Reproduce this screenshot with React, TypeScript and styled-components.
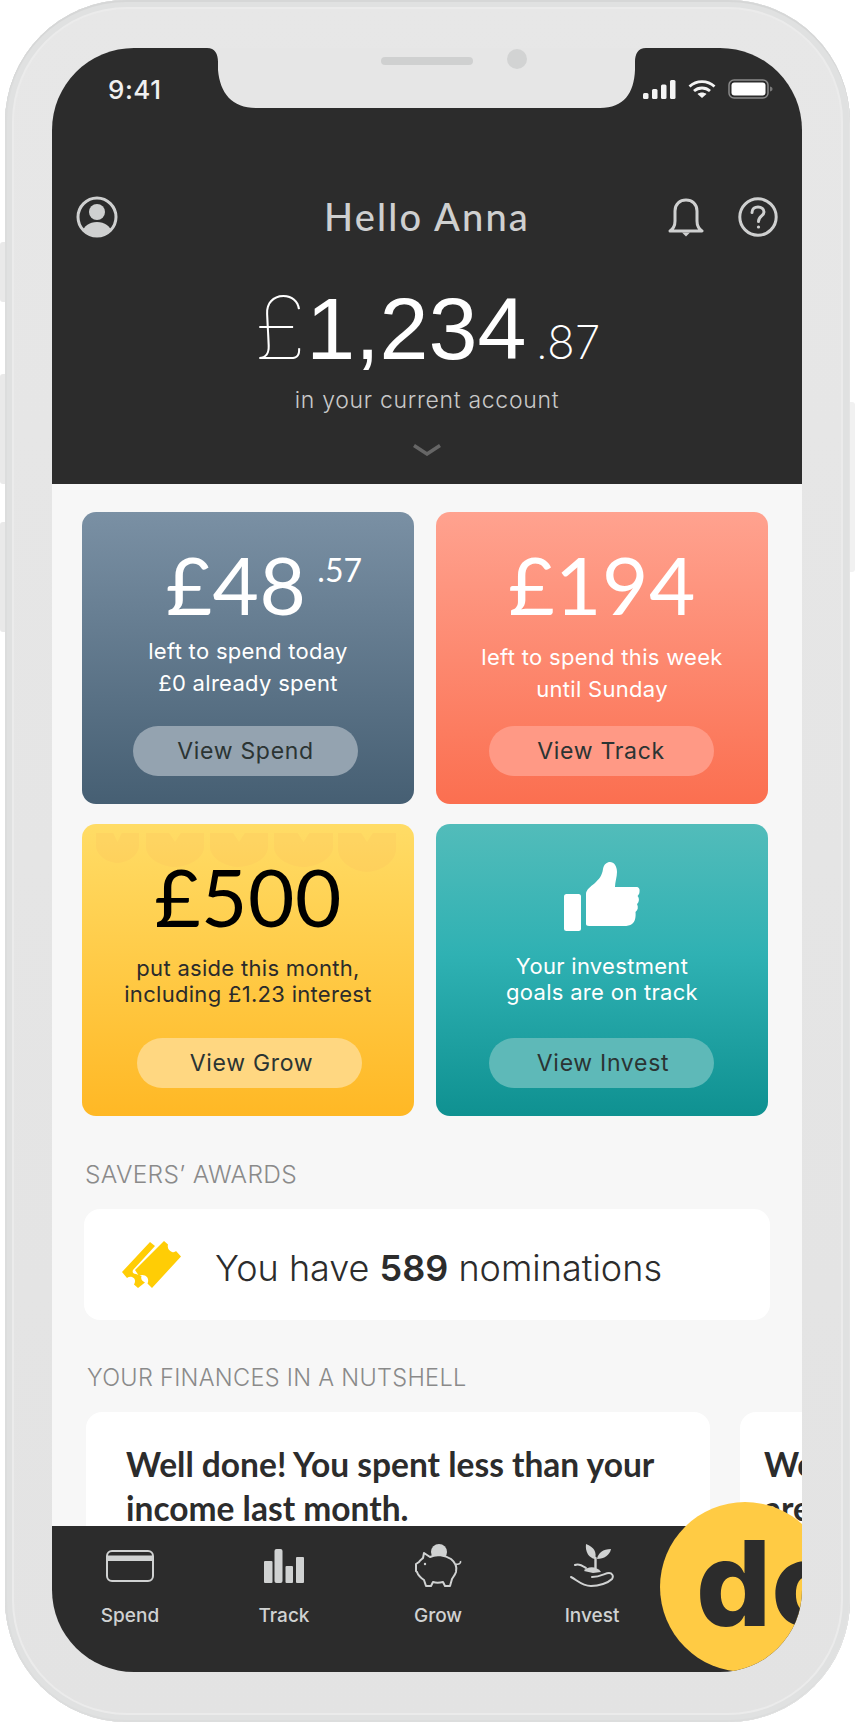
import styled, { createGlobalStyle } from 'styled-components'

// global
const GlobalStyle = createGlobalStyle`
  html, body {
    margin: 0;
    padding: 0;
    background: #fff;
  }
  * {
    box-sizing: border-box;
  }
`

// styled
const Page = styled.div`
  width: 855px;
  height: 1724px;
  padding: 0 5px;
  overflow: hidden;
  font-family: Inter, 'Liberation Sans', sans-serif;
`
const Phone = styled.div`
  position: relative;
  width: 845px;
  height: 1722px;
  padding: 48px 48px 0 47px;
  border-radius: 122px;
  background: linear-gradient(#e7e7e7, #e3e3e3);
  box-shadow:
    inset 0 2px 0 #d6d7d7,
    inset 2px 0 0 #dcdddd,
    inset -1px 0 0 #e4e4e4,
    inset 0 -2px 0 #dcdddd,
    inset 0 0 0 7px #e0e1e1,
    inset 0 0 0 9px #ebebeb;
`
const SideButton = styled.div<{ $top: number; $height: number; $right?: boolean }>`
  position: absolute;
  top: ${(p) => p.$top}px;
  height: ${(p) => p.$height}px;
  width: 5px;
  background: ${(p) => (p.$right ? '#f1f1f1' : '#e9e9e9')};
  ${(p) => (p.$right ? 'right: -5px; border-radius: 0 3px 3px 0;' : 'left: -5px; border-radius: 3px 0 0 3px;')}
`
const Screen = styled.div`
  position: relative;
  display: flex;
  flex-direction: column;
  width: 750px;
  height: 1624px;
  border-radius: 82px;
  overflow: hidden;
  background: #f7f7f7;
`
const Notch = styled.svg`
  position: absolute;
  top: 0;
  left: 155px;
`
const Header = styled.header`
  flex: none;
  height: 436px;
  padding: 27px 24px 0 24px;
  background: #2c2c2c;
  display: flex;
  flex-direction: column;
  align-items: center;
`
const StatusBar = styled.div`
  width: 100%;
  height: 28px;
  display: flex;
  justify-content: space-between;
  align-items: center;
  padding: 0 5px 0 32px;
`
const Time = styled.span`
  font-size: 26px;
  font-weight: 500;
  letter-spacing: 0.5px;
  color: #f0f0f0;
`
const StatusIcons = styled.div`
  display: flex;
  align-items: center;
  gap: 12px;
`
const TopRow = styled.div`
  width: 100%;
  margin-top: 90px;
  height: 40px;
  display: grid;
  grid-template-columns: 1fr auto 1fr;
  align-items: center;
`
const Greeting = styled.h1`
  margin: 0 0 2px;
  font-family: Lato, sans-serif;
  font-size: 38px;
  font-weight: 500;
  letter-spacing: 2.2px;
  color: #cfd0d0;
`
const HeaderActions = styled.div`
  justify-self: end;
  display: flex;
  align-items: center;
  gap: 34px;
`
const Balance = styled.div`
  margin-top: 42px;
  display: flex;
  align-items: baseline;
  color: #fff;
  line-height: 104px;
`
const BalanceCurrency = styled.span`
  font-size: 88px;
  font-weight: 100;
`
const BalanceMain = styled.span`
  font-family: 'Liberation Sans', sans-serif;
  font-size: 88px;
  font-weight: 400;
`
const BalancePence = styled.span`
  margin-left: 9px;
  font-size: 46px;
  font-weight: 200;
`
const BalanceCaption = styled.div`
  margin-top: -8px;
  font-size: 23px;
  font-weight: 300;
  letter-spacing: 0.7px;
  color: #c9c9c9;
`
const Chevron = styled.svg`
  margin-top: 30px;
`
const Content = styled.main`
  flex: 1;
  min-height: 0;
  overflow: hidden;
  padding-top: 28px;
`
const CardGrid = styled.div`
  display: grid;
  grid-template-columns: 332px 332px;
  gap: 20px 22px;
  margin-left: 30px;
`
const tones = {
  spend: { bg: 'linear-gradient(#7a90a4, #465f73)', button: '#94a3b0', color: '#fff' },
  track: { bg: 'linear-gradient(#ffa28f, #fb6f50)', button: '#ff9985', color: '#fff' },
  grow: { bg: 'linear-gradient(#ffdc66, #ffb825)', button: '#ffd781', color: '#2b2b2b' },
  invest: { bg: 'linear-gradient(#52bcba, #2fb1b3 45%, #0f9191)', button: '#5eb9b8', color: '#fff' },
}
type Tone = keyof typeof tones

const Card = styled.section<{ $tone: Tone }>`
  position: relative;
  height: 292px;
  padding-bottom: 28px;
  border-radius: 14px;
  overflow: hidden;
  display: flex;
  flex-direction: column;
  align-items: center;
  background: ${(p) => tones[p.$tone].bg};
  color: ${(p) => tones[p.$tone].color};
`
const Amount = styled.div<{ $dark?: boolean; $nudge?: number }>`
  position: relative;
  height: 80px;
  margin: 32px ${(p) => p.$nudge ?? 0}px 0 0;
  font-family: Lato, sans-serif;
  font-size: 80px;
  font-weight: 400;
  line-height: 80px;
  letter-spacing: 0.5px;
  color: ${(p) => (p.$dark ? '#000' : '#fff')};
`
const AmountPence = styled.span`
  position: absolute;
  left: calc(100% + 11px);
  top: -14px;
  font-size: 32px;
  font-weight: 400;
  letter-spacing: 0;
`
const CardText = styled.p<{ $top: number; $line: number }>`
  margin: ${(p) => p.$top}px 0 0;
  font-size: 22px;
  font-weight: 400;
  line-height: ${(p) => p.$line}px;
  letter-spacing: 0.3px;
  text-align: center;
`
const ViewButton = styled.button<{ $tone: Tone; $nudge?: number; $inset?: number }>`
  margin: auto ${(p) => p.$nudge ?? 0}px 0 0;
  width: 225px;
  height: 50px;
  padding: 0 0 0 ${(p) => p.$inset ?? 0}px;
  border: 0;
  border-radius: 25px;
  background: ${(p) => tones[p.$tone].button};
  font-family: Inter, sans-serif;
  font-size: 23px;
  font-weight: 400;
  letter-spacing: 0.7px;
  color: #2b3433;
`
const Hearts = styled.svg`
  position: absolute;
  top: 8px;
  left: 14px;
`
const ThumbIcon = styled.svg`
  margin-top: 38px;
`
const SectionLabel = styled.h2<{ $top: number; $left: number; $size: number }>`
  margin: ${(p) => p.$top}px 0 0 ${(p) => p.$left}px;
  font-size: ${(p) => p.$size}px;
  font-weight: 300;
  line-height: 28px;
  letter-spacing: 0.3px;
  color: #8a8a8a;
  text-transform: uppercase;
`
const AwardCard = styled.div`
  margin: 21px 0 0 32px;
  width: 686px;
  height: 111px;
  padding-left: 38px;
  border-radius: 16px;
  background: #fff;
  display: flex;
  align-items: center;
  gap: 34px;
`
const AwardText = styled.span`
  padding-top: 6px;
  font-size: 36px;
  font-weight: 300;
  color: #2c2c2c;
  b {
    font-weight: 600;
  }
`
const FinanceRow = styled.div`
  margin: 20px 0 0 34px;
  display: flex;
  gap: 30px;
`
const FinanceCard = styled.article`
  flex: none;
  width: 624px;
  height: 300px;
  padding: 30px 24px 0 40px;
  border-radius: 16px 16px 0 0;
  background: #fff;
`
const FinanceTitle = styled.h3`
  margin: 0;
  font-family: Lato, sans-serif;
  font-size: 33.5px;
  font-weight: 700;
  line-height: 44px;
  color: #2c2c2c;
`
const NextTitle = styled(FinanceTitle)`
  margin-left: -16px;
  white-space: nowrap;
`
const Nav = styled.nav`
  flex: none;
  height: 146px;
  background: #2c2c2c;
  display: flex;
  padding-top: 18px;
  padding-left: 1px;
`
const NavItem = styled.div`
  width: 154px;
  height: 84px;
  display: flex;
  flex-direction: column;
  align-items: center;
  justify-content: space-between;
`
const NavIconBox = styled.div`
  height: 44px;
  display: flex;
  align-items: center;
  justify-content: center;
`
const NavLabel = styled.span`
  font-size: 19px;
  font-weight: 500;
  line-height: 24px;
  color: #d0d2d2;
`
const DoBadge = styled.div`
  position: absolute;
  left: 608px;
  top: 1454px;
  width: 170px;
  height: 170px;
  border-radius: 50%;
  background: #ffcb44;
  overflow: hidden;
`
const DoText = styled.span`
  position: absolute;
  left: 36px;
  top: 6px;
  font-family: Inter, sans-serif;
  font-size: 118px;
  font-weight: 800;
  line-height: 150px;
  letter-spacing: 0;
  color: #2c2c2c;
`

// icons
const SignalIcon = () => (
  <svg width="33" height="19" viewBox="0 0 33 19" fill="#f4f4f4">
    <rect x="0" y="13" width="5.5" height="6" rx="1.5" />
    <rect x="9" y="9" width="5.5" height="10" rx="1.5" />
    <rect x="18" y="4.5" width="5.5" height="14.5" rx="1.5" />
    <rect x="27" y="0" width="5.5" height="19" rx="1.5" />
  </svg>
)
const WifiIcon = () => (
  <svg width="28" height="18" viewBox="0 0 28 18" fill="none" stroke="#f4f4f4" strokeWidth="2.8">
    <path d="M1.5 6.5C8.5 0 19.5 0 26.5 6.5" />
    <path d="M6 11C10.5 7 17.5 7 22 11" />
    <path d="M14 18L9.5 14C12 12 16 12 18.5 14Z" fill="#f4f4f4" stroke="none" />
  </svg>
)
const BatteryIcon = () => (
  <svg width="45" height="20" viewBox="0 0 45 20">
    <rect x="1" y="1" width="39" height="18" rx="5" fill="none" stroke="#8a8a8a" strokeWidth="1.5" />
    <rect x="3.5" y="3.5" width="34" height="13" rx="3" fill="#fff" />
    <path d="M42 7.5C44 8 44.5 9 44.5 10C44.5 11 44 12 42 12.5Z" fill="#7a7a7a" />
  </svg>
)
const AvatarIcon = () => (
  <svg width="42" height="42" viewBox="0 0 42 42">
    <defs>
      <clipPath id="avatar-clip">
        <circle cx="21" cy="21" r="19" />
      </clipPath>
    </defs>
    <circle cx="21" cy="21" r="19" fill="none" stroke="#cfd0d0" strokeWidth="3" />
    <circle cx="21" cy="16" r="8" fill="#cfd0d0" />
    <ellipse cx="21" cy="36" rx="14" ry="10" fill="#cfd0d0" clipPath="url(#avatar-clip)" />
  </svg>
)
const BellIcon = () => (
  <svg width="36" height="39" viewBox="0 0 36 39" fill="none" stroke="#cfd0d0" strokeWidth="3" strokeLinecap="round">
    <path d="M2 33C5 31 7 28 7 23V13C7 6 12 2 18 2C24 2 29 6 29 13V23C29 28 31 31 34 33Z" strokeLinejoin="round" />
    <path d="M14 34.5H22L18 38.5Z" fill="#cfd0d0" stroke="none" />
  </svg>
)
const HelpIcon = () => (
  <svg width="40" height="40" viewBox="0 0 40 40" fill="none" stroke="#cfd0d0" strokeWidth="3" strokeLinecap="round">
    <circle cx="20" cy="20" r="18.2" />
    <path d="M14 15.5C14 11.5 17 10 20 10C23.5 10 26 12 26 15C26 19 20.5 19 20.5 24.5" />
    <circle cx="20.5" cy="30" r="1.6" fill="#cfd0d0" stroke="none" />
  </svg>
)
const HeartsPattern = () => {
  const shields = [
    { x: 0, w: 43, h: 31 },
    { x: 50, w: 58, h: 35 },
    { x: 114, w: 58, h: 35 },
    { x: 178, w: 59, h: 35 },
    { x: 242, w: 58, h: 40 },
  ]
  return (
    <Hearts width="300" height="42" viewBox="0 0 300 42">
      <defs>
        <pattern id="heart-dots" width="2" height="2" patternUnits="userSpaceOnUse">
          <circle cx="1" cy="1" r="0.7" fill="#f9bd5a" />
        </pattern>
      </defs>
      {shields.map((s) => (
        <path
          key={s.x}
          fill="url(#heart-dots)"
          opacity="0.6"
          d={`M${s.x} 1H${s.x + s.w * 0.4}L${s.x + s.w * 0.5} 10L${s.x + s.w * 0.6} 1H${s.x + s.w}V${s.h * 0.42}C${s.x + s.w} ${s.h * 0.8} ${s.x + s.w * 0.68} ${s.h} ${s.x + s.w * 0.5} ${s.h}C${s.x + s.w * 0.32} ${s.h} ${s.x} ${s.h * 0.8} ${s.x} ${s.h * 0.42}Z`}
        />
      ))}
    </Hearts>
  )
}
const ThumbsUp = () => (
  <ThumbIcon width="76" height="70" viewBox="0 0 76 70" fill="#fff">
    <rect x="0" y="32" width="17" height="37" rx="2.5" />
    <path d="M22 62V32C22 28 26 25 31 21C35 17 38 14 39 7C40 2 43 0 46 0C50 0 53 4 53 10C53 15 51 20 51 25L72 25C75 25 76 27 75.5 30C75.5 32 74 33.5 73.5 34C75.5 36 75.5 40 73 42C74.5 45 74 48 71.5 50C72 55 71 60 68 62C66 63.5 63 64 60 64H25C23 64 22 63 22 62Z" />
  </ThumbIcon>
)
const TicketIcon = () => (
  <svg width="59" height="47" viewBox="0 0 59 47" fill="#ffcd05">
    <path d="M42 0L46 3.5C45 7 47 10 50 11C52 11.5 53 11 54 10L59 15.5L30 47L25.5 42.5C27 39 26 36 23 34.5C20.5 33.5 18.5 34 17 35L13 29Z" />
    <path d="M28 1L33 5L11 29C10 31 11 33 14 33L19.5 35C18.5 38 20 40 23 41.5L16 47L12 43.5C14 40 13 37 10 36C8 35.5 6.5 36 5 37L0 31Z" />
  </svg>
)
const CardNavIcon = () => (
  <svg width="48" height="32" viewBox="0 0 48 32" fill="none">
    <rect x="1" y="1" width="46" height="30" rx="5" stroke="#d0d2d2" strokeWidth="2" />
    <rect x="1" y="5.5" width="46" height="5.5" fill="#d0d2d2" />
  </svg>
)
const BarsNavIcon = () => (
  <svg width="40" height="34" viewBox="0 0 40 34" fill="#d0d2d2">
    <rect x="0" y="12" width="8.5" height="22" rx="1" />
    <rect x="10.5" y="0" width="8" height="34" rx="2" />
    <rect x="21.5" y="17" width="7.5" height="17" rx="1" />
    <rect x="32" y="8" width="8" height="26" rx="1" />
  </svg>
)
const PigNavIcon = () => (
  <svg width="47" height="44" viewBox="0 0 47 44" fill="none" stroke="#d0d2d2" strokeWidth="2" strokeLinejoin="round">
    <circle cx="24" cy="8" r="8" fill="#d0d2d2" stroke="none" />
    <path
      d="M9 9L15 13C21 10 30 11 36 15C41 19 42 24 41 28C40 31 38 33 37 35L35 42H30L28 38C24 39 21 39 18 38L16 42H11L9 36C6 34 3 31 2 28L1 27V20L4 18C5 16 7 15 8 14Z"
      fill="#2c2c2c"
    />
    <path d="M41 20C44 21 46 19 45.5 17" strokeWidth="1.6" />
    <circle cx="10" cy="20" r="1.2" fill="#d0d2d2" stroke="none" />
  </svg>
)
const PlantNavIcon = () => (
  <svg width="44" height="44" viewBox="0 0 44 44" fill="none" stroke="#d0d2d2" strokeWidth="2" strokeLinecap="round">
    <path d="M16 0C24 3 27 8 25 15C19 14 15 8 16 0Z" fill="#d0d2d2" stroke="none" />
    <path d="M41 5C40 11 34 15 27 15C28 9 33 5 41 5Z" fill="#d0d2d2" stroke="none" />
    <path d="M25.5 14V24" strokeWidth="2.4" />
    <path d="M14 27C17 22 27 22 31 28L23 29Z" fill="#d0d2d2" stroke="none" />
    <path d="M5 21C9 19 13 22 16 24" />
    <path d="M1 33C7 36 12 42 21 42C29 42 38 39 42 35C44 32 42 29 39 29C35 29 31 33 22 33" />
  </svg>
)

// component
const App = () => (
  <>
    <GlobalStyle />
    <Page>
      <Phone>
        <SideButton $top={242} $height={60} />
        <SideButton $top={374} $height={110} />
        <SideButton $top={522} $height={110} />
        <SideButton $right $top={402} $height={170} />
        <Screen>
          <Header>
            <StatusBar>
              <Time>9:41</Time>
              <StatusIcons>
                <SignalIcon />
                <WifiIcon />
                <BatteryIcon />
              </StatusIcons>
            </StatusBar>
            <TopRow>
              <AvatarIcon />
              <Greeting>Hello Anna</Greeting>
              <HeaderActions>
                <BellIcon />
                <HelpIcon />
              </HeaderActions>
            </TopRow>
            <Balance>
              <BalanceCurrency>£</BalanceCurrency>
              <BalanceMain>1,234</BalanceMain>
              <BalancePence>.87</BalancePence>
            </Balance>
            <BalanceCaption>in your current account</BalanceCaption>
            <Chevron width="28" height="12" viewBox="0 0 28 12" fill="none" stroke="#666" strokeWidth="3.5">
              <path d="M1 1.5L14 10L27 1.5" />
            </Chevron>
          </Header>
          <Content>
            <CardGrid>
              <Card $tone="spend">
                <Amount $nudge={24}>
                  £48
                  <AmountPence>.57</AmountPence>
                </Amount>
                <CardText $top={11} $line={32}>
                  left to spend today
                  <br />
                  £0 already spent
                </CardText>
                <ViewButton $tone="spend" $nudge={5}>View Spend</ViewButton>
              </Card>
              <Card $tone="track">
                <Amount>£194</Amount>
                <CardText $top={17} $line={32}>
                  left to spend this week
                  <br />
                  until Sunday
                </CardText>
                <ViewButton $tone="track" $nudge={2}>View Track</ViewButton>
              </Card>
              <Card $tone="grow">
                <HeartsPattern />
                <Amount $dark>£500</Amount>
                <CardText $top={19} $line={26}>
                  put aside this month,
                  <br />
                  including £1.23 interest
                </CardText>
                <ViewButton $tone="grow" $nudge={-2} $inset={5}>View Grow</ViewButton>
              </Card>
              <Card $tone="invest">
                <ThumbsUp />
                <CardText $top={21} $line={26}>
                  Your investment
                  <br />
                  goals are on track
                </CardText>
                <ViewButton $tone="invest" $nudge={2} $inset={4}>View Invest</ViewButton>
              </Card>
            </CardGrid>
            <SectionLabel $top={44} $left={33} $size={24.5}>Savers’ Awards</SectionLabel>
            <AwardCard>
              <TicketIcon />
              <AwardText>
                You have <b>589</b> nominations
              </AwardText>
            </AwardCard>
            <SectionLabel $top={44} $left={35} $size={23.5}>Your finances in a nutshell</SectionLabel>
            <FinanceRow>
              <FinanceCard>
                <FinanceTitle>Well done! You spent less than your income last month.</FinanceTitle>
              </FinanceCard>
              <FinanceCard>
                <NextTitle>
                  Well done!
                  <br />
                  are
                </NextTitle>
              </FinanceCard>
            </FinanceRow>
          </Content>
          <Nav>
            <NavItem>
              <NavIconBox>
                <CardNavIcon />
              </NavIconBox>
              <NavLabel>Spend</NavLabel>
            </NavItem>
            <NavItem>
              <NavIconBox>
                <BarsNavIcon />
              </NavIconBox>
              <NavLabel>Track</NavLabel>
            </NavItem>
            <NavItem>
              <NavIconBox>
                <PigNavIcon />
              </NavIconBox>
              <NavLabel>Grow</NavLabel>
            </NavItem>
            <NavItem>
              <NavIconBox>
                <PlantNavIcon />
              </NavIconBox>
              <NavLabel>Invest</NavLabel>
            </NavItem>
          </Nav>
          <DoBadge>
            <DoText>do</DoText>
          </DoBadge>
          <Notch width="439" height="60" viewBox="0 0 439 60" fill="#e6e6e6">
            <path d="M0 0C8 0 11 6 11 14V22C13 45 25 60 49 60H393C417 60 427 45 428 22V14C428 6 431 0 439 0Z" />
            <rect x="174" y="9" width="92" height="8" rx="4" fill="#cfd0d0" />
            <ellipse cx="310" cy="11" rx="10" ry="10" fill="#d2d3d3" />
          </Notch>
        </Screen>
      </Phone>
    </Page>
  </>
)

export default App
